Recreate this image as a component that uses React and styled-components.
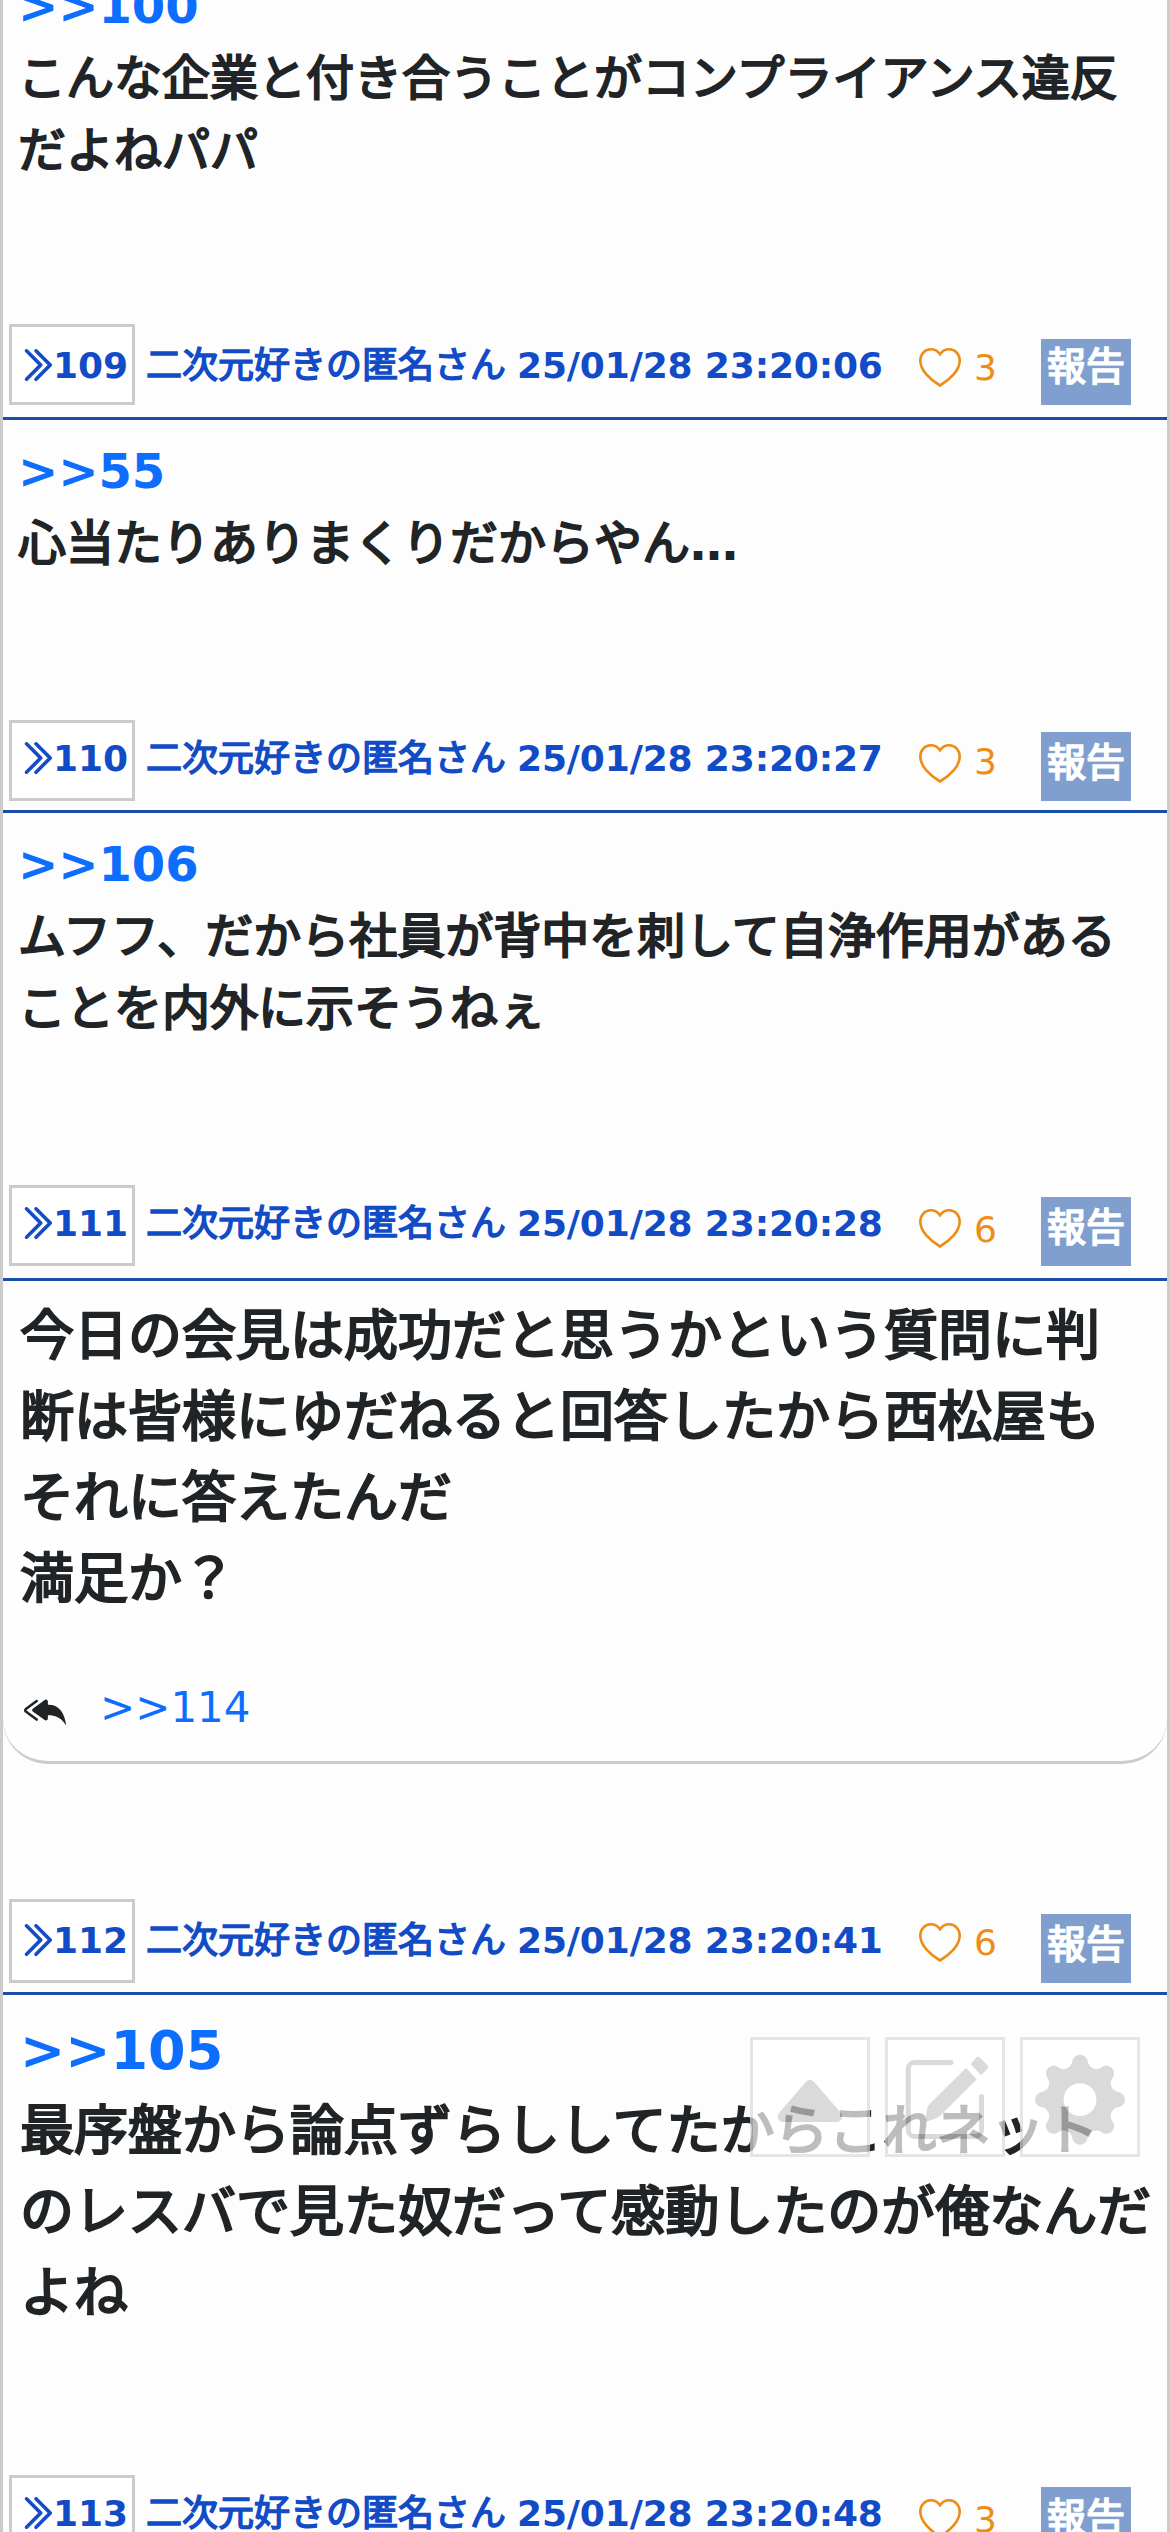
import React from "react";
import styled, { createGlobalStyle } from "styled-components";
import { BsChevronDoubleRight, BsReplyAllFill } from "react-icons/bs";

const GlobalStyle = createGlobalStyle`
  * {
    box-sizing: border-box;
  }
  html,
  body {
    margin: 0;
    height: 2532px;
    overflow: hidden;
    background: #fdfdfd;
  }
  body {
    font-family: "DejaVu Sans", "Noto Sans CJK JP", sans-serif;
    color: #212426;
  }
  a {
    color: #0d6efd;
    text-decoration: none;
  }
`;

const Thread = styled.main`
  height: 2532px;
  overflow: hidden;
  border: solid #cbcbcb;
  border-width: 0 3px;
  background: #fdfdfd;
`;

const PostHeader = styled.header`
  display: flex;
  align-items: flex-start;
  height: ${({ $height }) => $height}px;
  padding-left: 6px;
  border-bottom: 3px solid #1a4da8;
  color: #124bc6;
  font-size: 36px;
  font-weight: 700;
  line-height: 54px;
  white-space: nowrap;
`;

const NumberBox = styled.a`
  display: flex;
  flex: none;
  width: 126px;
  height: ${({ $height }) => $height}px;
  padding: ${({ $drop }) => $drop}px 0 0 5px;
  border: 3px solid #cbcbcb;
  background: #fff;
  color: inherit;
  svg {
    flex: none;
    width: 38px;
    height: 38px;
    margin: 7px -2px 0 0;
    stroke: currentColor;
    stroke-width: 0.5;
  }
`;

const Author = styled.span`
  width: 763px;
  margin-left: 11px;
  padding-top: ${({ $drop }) => $drop}px;
`;

const AuthorName = styled.span`
  font-weight: 400;
  -webkit-text-stroke: 1.5px currentColor;
`;

const Time = styled.time`
  margin-left: -1.5px;
  letter-spacing: -0.15px;
`;

const Like = styled.button`
  display: flex;
  width: 122px;
  margin: 24px 0 0 10px;
  padding: 0;
  border: 0;
  background: none;
  color: #ee8d16;
  font: 400 36px / 42px "DejaVu Sans", sans-serif;
  svg {
    flex: none;
    width: 42px;
    height: 39px;
    margin-right: 13px;
  }
`;

const LikeCount = styled.span`
  margin-top: ${({ $drop }) => $drop}px;
`;

const Report = styled.button`
  width: 90px;
  height: ${({ $height }) => $height}px;
  margin-top: ${({ $top }) => $top}px;
  padding: ${({ $pad }) => $pad}px 0 0;
  display: flex;
  justify-content: center;
  border: 0;
  background: #809fce;
  color: #fff;
  font: 400 39px / 42px "Noto Sans CJK JP", sans-serif;
  -webkit-text-stroke: 1.7px currentColor;
`;

const PostBody = styled.div`
  padding: ${({ $large }) => ($large ? "15px 10px 0 17px" : "15px 12px 0 15px")};
  margin-bottom: 141px;
  font-size: ${({ $large }) => ($large ? 54 : 48)}px;
  font-weight: 700;
  line-height: 1.5;
  p {
    margin: 0;
    white-space: nowrap;
  }
`;

const Line = styled.p`
  font-weight: 400;
  -webkit-text-stroke: ${({ $large }) => ($large ? 2.2 : 2)}px currentColor;
`;

const Ellipsis = styled.b`
  -webkit-text-stroke: 0;
`;

const ReplyCard = styled(PostBody)`
  height: 483px;
  margin-bottom: 135px;
  border-bottom: 3px solid #cbcbcb;
  border-radius: 0 0 45px 45px;
  background: #fefefe;
`;

const Replies = styled.div`
  display: flex;
  align-items: center;
  height: 60px;
  margin: 57px 0 0 4px;
  font-size: 42px;
  font-weight: 400;
  svg {
    margin: 5px 34px 0 0;
  }
`;

const FloatingNav = styled.nav`
  position: fixed;
  top: 2037px;
  right: 30px;
  display: flex;
  gap: 15px;
  opacity: 0.7;
`;

const NavButton = styled.button`
  width: 120px;
  height: 120px;
  padding: 0;
  border: 3px solid #dbdbdb;
  background: #fff;
  color: #cacaca;
  svg {
    display: block;
    margin: -3px;
  }
`;

const HeartIcon = () => (
  <svg viewBox="0 0 42 39" fill="none" stroke="currentColor" strokeWidth="2.6">
    <path d="M21 6.2C18.5 2.8 15.5 1.3 11.8 1.3 5.7 1.3 1.3 6.2 1.3 12.8 1.3 22.5 11.5 32 21 37.5 30.5 32 40.7 22.5 40.7 12.8 40.7 6.2 36.3 1.3 30.2 1.3 26.5 1.3 23.5 2.8 21 6.2Z" />
  </svg>
);

const CaretIcon = () => (
  <svg width="120" height="120" fill="currentColor">
    <path d="M55.8 44.9a5.6 5.6 0 0 1 8.4 0L90.8 75.8c3.2 3.7.6 9.2-4.2 9.2H33.4c-4.8 0-7.4-5.5-4.2-9.2Z" />
  </svg>
);

const PencilIcon = () => (
  <svg width="120" height="120" fill="currentColor">
    <path
      d="M66 25.5H29.7a6.5 6.5 0 0 0-6.5 6.5V93a6.5 6.5 0 0 0 6.5 6.5H90a6.5 6.5 0 0 0 6.5-6.5V59.5"
      fill="none"
      stroke="currentColor"
      strokeWidth="5"
      strokeLinecap="round"
    />
    <path d="M81 31 91.7 42.3 55.5 78.5Q53.5 80.5 50.5 81.5L42.8 84.3Q40.2 84.8 40.8 82L42 71.8Q42.2 69.5 43.8 68Z" />
    <path d="M90.8 21Q93 18.6 95.2 21L102 27.8Q104.3 30.3 102 32.6L96 38 85.7 27.3Z" />
  </svg>
);

// eight round lobes joined by concave arcs
const gearPath = () => {
  const cx = 60;
  const cy = 62.7;
  const lobe = { dist: 37.3, r: 7.7 };
  const notch = { dist: 42.86, r: 8.86 };
  const at = (dist, angle) => [
    cx + dist * Math.sin(angle),
    cy - dist * Math.cos(angle),
  ];
  const t = lobe.r / (lobe.r + notch.r);
  const touch = (lobeAngle, notchAngle) => {
    const [lx, ly] = at(lobe.dist, lobeAngle);
    const [nx, ny] = at(notch.dist, notchAngle);
    return `${lx + (nx - lx) * t} ${ly + (ny - ly) * t}`;
  };
  const half = Math.PI / 8;
  let d = `M${touch(0, -half)}`;
  for (let i = 0; i < 8; i++) {
    const a = i * 2 * half;
    d += `A${lobe.r} ${lobe.r} 0 0 1 ${touch(a, a + half)}`;
    d += `A${notch.r} ${notch.r} 0 0 0 ${touch(a + 2 * half, a + half)}`;
  }
  return `${d}ZM43.6 62.7a16.4 16.4 0 1 0 32.8 0a16.4 16.4 0 1 0-32.8 0Z`;
};

const GearIcon = () => (
  <svg width="120" height="120" fill="currentColor" fillRule="evenodd">
    <path d={gearPath()} />
  </svg>
);

const AUTHOR = "二次元好きの匿名さん";

const posts = [
  {
    id: 109,
    time: "25/01/28 23:20:06",
    likes: 3,
    head: { height: 96, box: 81, drop: 15, count: -1, report: [15, 66, 3] },
    anchor: 55,
    lines: ["心当たりありまくりだからやん…"],
  },
  {
    id: 110,
    time: "25/01/28 23:20:27",
    likes: 3,
    head: { height: 93, box: 81, drop: 12, count: -3, report: [12, 69, 6] },
    anchor: 106,
    lines: [
      "ムフフ、だから社員が背中を刺して自浄作用がある",
      "ことを内外に示そうねぇ",
    ],
  },
  {
    id: 111,
    time: "25/01/28 23:20:28",
    likes: 6,
    head: { height: 96, box: 81, drop: 12, count: 0, report: [12, 69, 6] },
    large: true,
    lines: [
      "今日の会見は成功だと思うかという質問に判",
      "断は皆様にゆだねると回答したから西松屋も",
      "それに答えたんだ",
      "満足か？",
    ],
    replies: [114],
  },
  {
    id: 112,
    time: "25/01/28 23:20:41",
    likes: 6,
    head: { height: 96, box: 84, drop: 15, count: -1, report: [15, 69, 6] },
    anchor: 105,
    large: true,
    lines: [
      "最序盤から論点ずらししてたからこれネット",
      "のレスバで見た奴だって感動したのが俺なんだ",
      "よね",
    ],
  },
  {
    id: 113,
    time: "25/01/28 23:20:48",
    likes: 3,
    head: { height: 96, box: 81, drop: 12, count: 0, report: [12, 69, 6] },
    lines: [],
  },
];

const PostContent = ({ anchor, lines, large, replies }) => {
  const Body = replies ? ReplyCard : PostBody;
  return (
    <Body $large={large}>
      {anchor && (
        <p>
          <a href={`#res${anchor}`}>&gt;&gt;{anchor}</a>
        </p>
      )}
      {lines.map((line) => (
        <Line key={line} $large={large}>
          {line.replace("…", "")}
          {line.endsWith("…") && <Ellipsis>…</Ellipsis>}
        </Line>
      ))}
      {replies && (
        <Replies>
          <BsReplyAllFill />
          {replies.map((id) => (
            <a key={id} href={`#res${id}`}>
              &gt;&gt;{id}
            </a>
          ))}
        </Replies>
      )}
    </Body>
  );
};

const Post = ({ id, time, likes, head, ...content }) => {
  const [top, height, pad] = head.report;
  return (
    <article id={`res${id}`}>
      <PostHeader $height={head.height}>
        <NumberBox href={`#res${id}`} $height={head.box} $drop={head.drop - 3}>
          <BsChevronDoubleRight />
          {id}
        </NumberBox>
        <Author $drop={head.drop}>
          <AuthorName>{AUTHOR}</AuthorName> <Time>{time}</Time>
        </Author>
        <Like>
          <HeartIcon />
          <LikeCount $drop={head.count}>{likes}</LikeCount>
        </Like>
        <Report $top={top} $height={height} $pad={pad}>
          報告
        </Report>
      </PostHeader>
      <PostContent {...content} />
    </article>
  );
};

// the thread opens scrolled part of the way into this post
const ScrolledPost = styled.article`
  margin-top: -45px;
  ${PostBody} {
    margin-bottom: 138px;
  }
`;

const App = () => {
  return (
    <>
      <GlobalStyle />
      <Thread>
        <ScrolledPost>
          <PostContent
            anchor={100}
            lines={[
              "こんな企業と付き合うことがコンプライアンス違反",
              "だよねパパ",
            ]}
          />
        </ScrolledPost>
        {posts.map((post) => (
          <Post key={post.id} {...post} />
        ))}
      </Thread>
      <FloatingNav>
        <NavButton>
          <CaretIcon />
        </NavButton>
        <NavButton>
          <PencilIcon />
        </NavButton>
        <NavButton>
          <GearIcon />
        </NavButton>
      </FloatingNav>
    </>
  );
};

export default App;
